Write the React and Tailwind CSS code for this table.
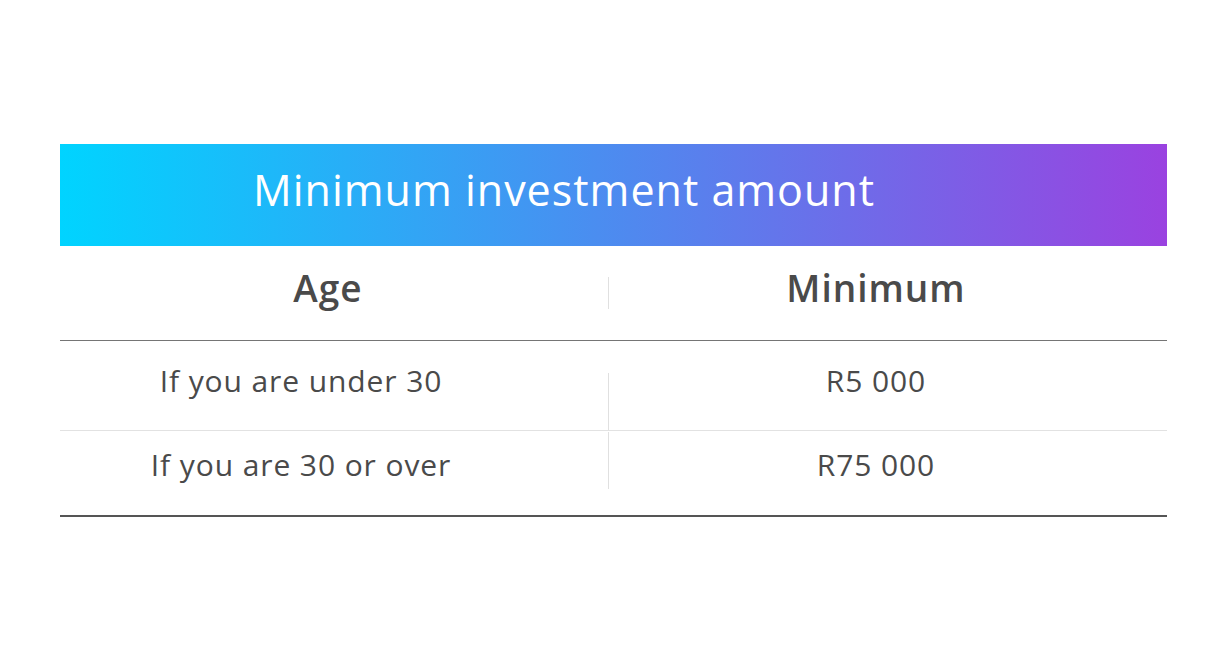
export default function App() {
  const rows = [
    ["If you are under 30", "R5 000"],
    ["If you are 30 or over", "R75 000"],
  ];

  return (
    <div className="min-h-screen w-full bg-white pt-[144px] px-[60px] font-['Open_Sans',sans-serif] text-[#4a4a4a]">
      <div className="w-[1107px]">
        <div className="h-[102px] flex items-center pl-[193px] pb-[12px] bg-[linear-gradient(to_right,#00d4ff,#9a42e0)]">
          <h1 className="text-[43px] leading-none font-medium text-white tracking-[1px]">
            Minimum investment amount
          </h1>
        </div>

        {/* header row */}
        <div className="grid grid-cols-[548px_1fr] h-[95px] border-b border-[#757575]">
          <div className="flex items-center justify-center pr-[12px] pb-[10px] text-[37px] tracking-[1px] font-semibold">
            Age
          </div>
          <div className="flex items-center">
            <div className="w-px h-[32px] bg-[#e0e0e0]" />
            <div className="flex-1 flex justify-center pr-[24px] pb-[10px] text-[37px] tracking-[1px] font-semibold">
              Minimum
            </div>
          </div>
        </div>

        {/* body rows */}
        <div className="grid grid-cols-[548px_1fr] h-[90px] border-b border-[#e2e2e2]">
          <div className="flex justify-center pr-[66px] pt-[17px] text-[30px] tracking-[0.9px]">
            {rows[0][0]}
          </div>
          <div className="flex items-stretch">
            <div className="w-px mt-[32px] bg-[#e0e0e0]" />
            <div className="flex-1 flex justify-center pr-[24px] pt-[17px] text-[30px] tracking-[0.9px]">
              {rows[0][1]}
            </div>
          </div>
        </div>
        <div className="grid grid-cols-[548px_1fr] h-[86px] border-b-2 border-[#555]">
          <div className="flex justify-center pr-[66px] pt-[11px] text-[30px] tracking-[0.9px]">
            {rows[1][0]}
          </div>
          <div className="flex items-stretch">
            <div className="w-px mt-[1px] mb-[26px] bg-[#e0e0e0]" />
            <div className="flex-1 flex justify-center pr-[24px] pt-[11px] text-[30px] tracking-[0.9px]">
              {rows[1][1]}
            </div>
          </div>
        </div>
      </div>
    </div>
  );
}
